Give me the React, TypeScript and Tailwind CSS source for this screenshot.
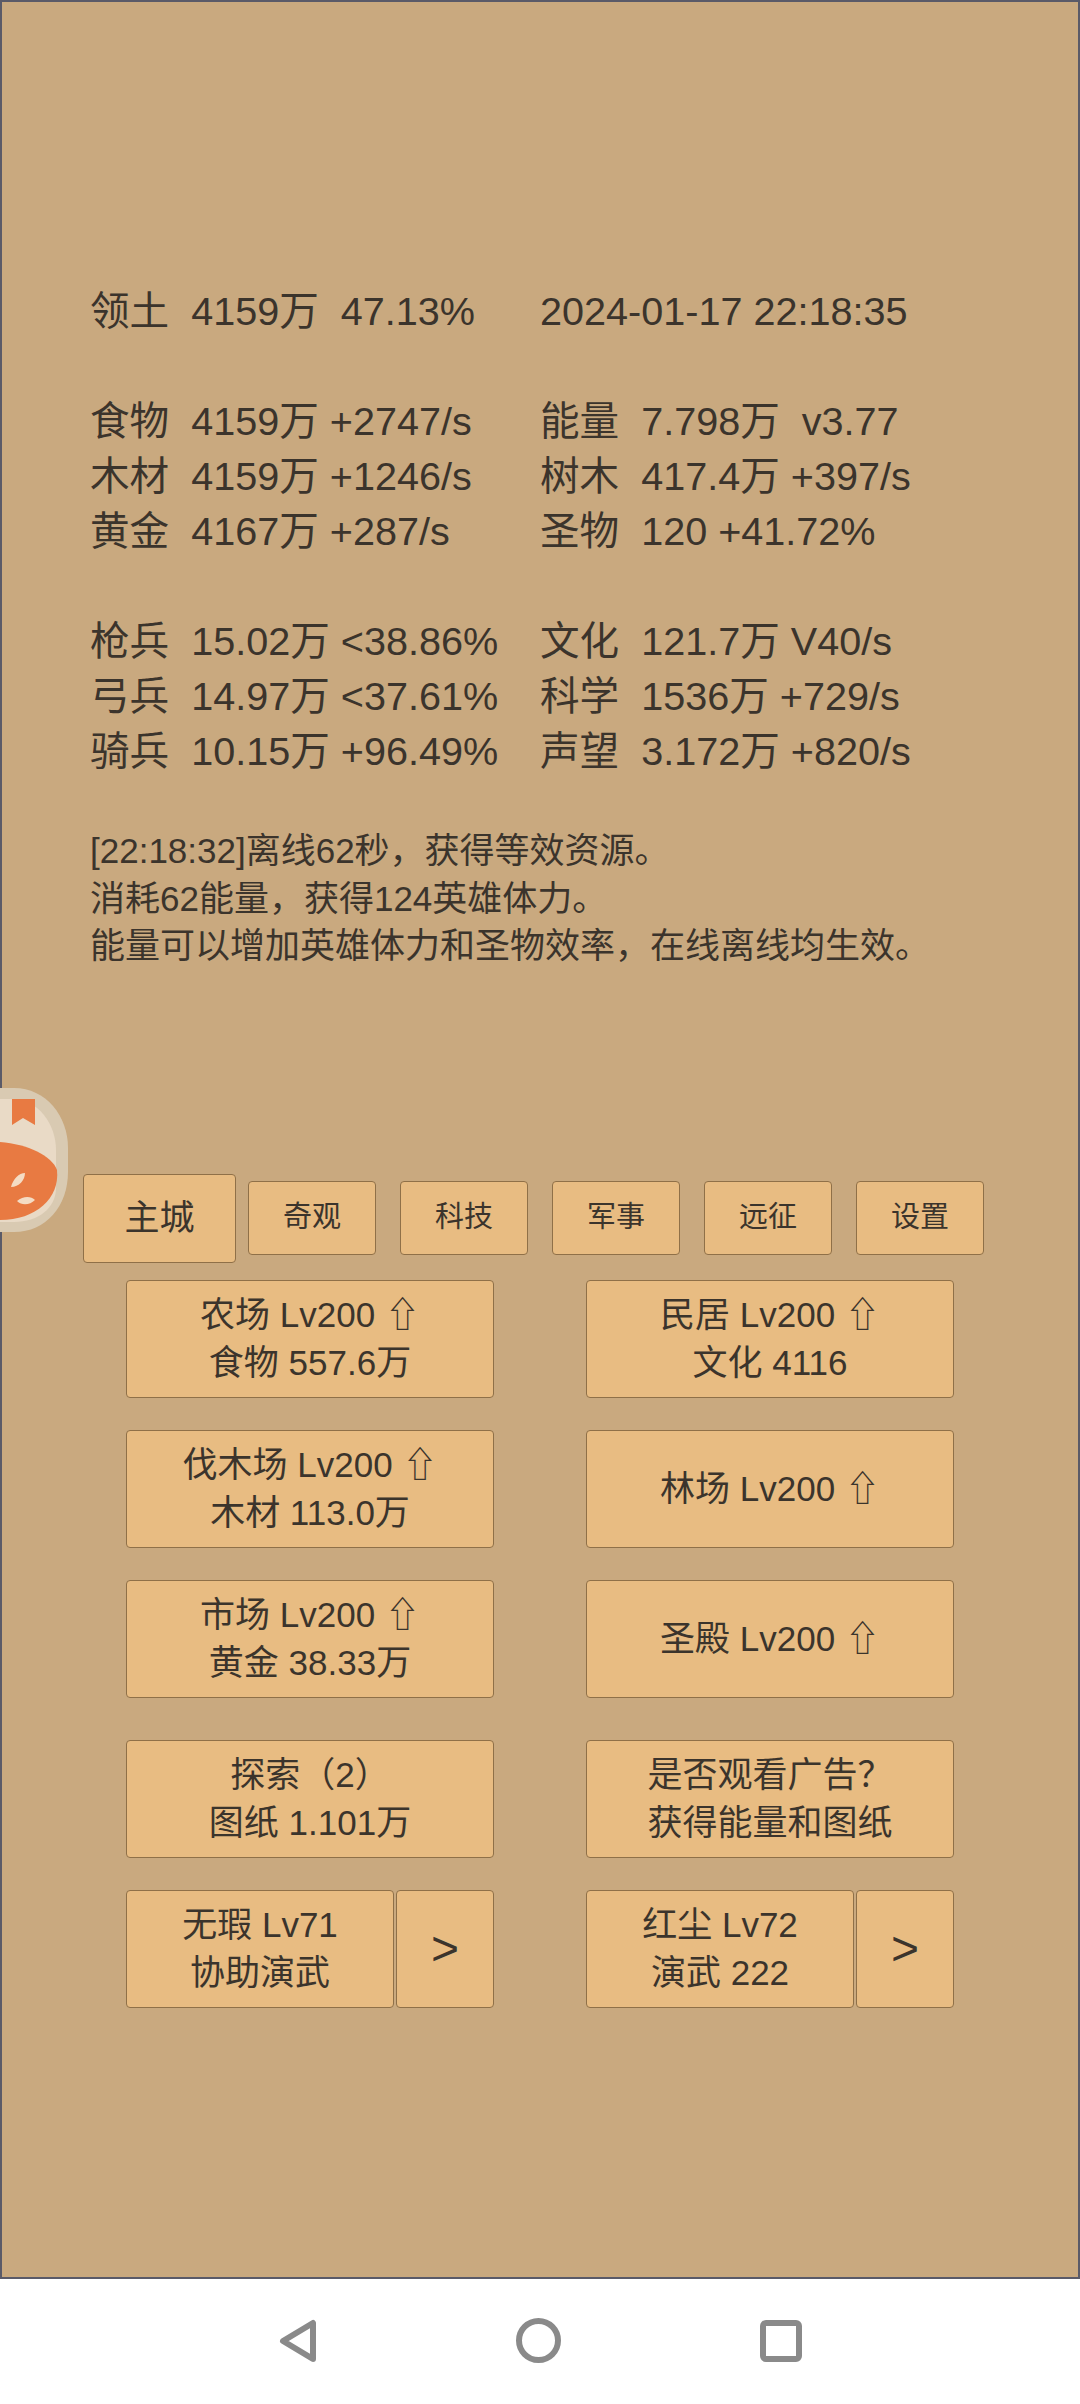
const font = "font-['Liberation_Sans','Noto_Sans_CJK_SC','DejaVu_Sans',sans-serif]";

const statRows = [
  ["领土  4159万  47.13%", "2024-01-17 22:18:35"],
  ["食物  4159万 +2747/s", "能量  7.798万  v3.77"],
  ["木材  4159万 +1246/s", "树木  417.4万 +397/s"],
  ["黄金  4167万 +287/s", "圣物  120 +41.72%"],
  ["枪兵  15.02万 <38.86%", "文化  121.7万 V40/s"],
  ["弓兵  14.97万 <37.61%", "科学  1536万 +729/s"],
  ["骑兵  10.15万 +96.49%", "声望  3.172万 +820/s"],
];

const tabs = ["奇观", "科技", "军事", "远征", "设置"];

const btn = "bg-[#e8bc82] border border-[#8f7048] rounded-[4px] text-center flex flex-col items-center justify-center";

function Building({ top, bottom }: { top: string; bottom?: string }) {
  return (
    <div className={`${btn} w-[368px] h-[118px] text-[35px] leading-[48px]`}>
      <div className="whitespace-pre">{top}</div>
      {bottom && <div className="whitespace-pre">{bottom}</div>}
    </div>
  );
}

function Hero({ top, bottom }: { top: string; bottom: string }) {
  return (
    <div className="w-[368px] h-[118px] flex justify-between">
      <div className={`${btn} w-[268px] h-full text-[35px] leading-[48px]`}>
        <div className="whitespace-pre">{top}</div>
        <div className="whitespace-pre">{bottom}</div>
      </div>
      <div className={`${btn} w-[98px] h-full text-[48px]`}>&gt;</div>
    </div>
  );
}

export default function App() {
  return (
    <div className={`${font} w-[1080px] h-[2404px] bg-white text-[#3b342c] flex flex-col overflow-hidden`}>
      <main className="relative h-[2279px] shrink-0 bg-[#c9a97f] border-2 border-[#5a5a68] pt-[282px]">
        {/* floating ball */}
        <svg className="absolute left-[-2px] top-[1086px]" width="70" height="146" viewBox="0 0 70 146">
          <path d="M0 0H14C46 0 68 28 68 60V84C68 118 46 144 14 144H0Z" fill="#d9cab2" />
          <path d="M0 11H12C38 11 56 36 56 62V100C56 120 38 134 14 134H0Z" fill="#e9dac6" />
          <path d="M12 11H35V37L23 30L12 37Z" fill="#e87a42" />
          <path d="M0 54C28 56 52 68 57 82C60 110 36 132 0 132Z" fill="#e87a42" />
          <path d="M11 99C13 91 19 85 25 85C25 92 19 99 11 99Z" fill="#f4dcc4" />
          <path d="M17 113C23 108 31 108 35 112C30 117 22 118 17 113Z" fill="#f4dcc4" />
        </svg>

        <div className="pl-[88px] text-[39.6px] leading-[55px]">
          <div className="grid grid-cols-[450px_1fr] whitespace-pre">
            {statRows.map((row, i) => (
              <div key={i} className="contents">
                <div className={i === 1 || i === 4 ? "mt-[55px]" : ""}>{row[0]}</div>
                <div className={i === 1 || i === 4 ? "mt-[55px]" : ""}>{row[1]}</div>
              </div>
            ))}
          </div>
          <div className="mt-[48px] text-[35px] leading-[47.5px]">
            <div>[22:18:32]离线62秒，获得等效资源。</div>
            <div>消耗62能量，获得124英雄体力。</div>
            <div>能量可以增加英雄体力和圣物效率，在线离线均生效。</div>
          </div>
        </div>

        <div className="mt-[204px] ml-[81px] flex items-center">
          <div className={`${btn} w-[153px] h-[89px] text-[35px] border-[#3c2f1e] mr-[12px]`}>主城</div>
          <div className="flex gap-[24px]">
            {tabs.map((t) => (
              <div key={t} className={`${btn} w-[128px] h-[74px] text-[29px]`}>{t}</div>
            ))}
          </div>
        </div>

        <div className="mt-[17px] ml-[124px] w-[828px] flex flex-col">
          <div className="flex justify-between">
            <Building top="农场 Lv200 ⇧" bottom="食物 557.6万" />
            <Building top="民居 Lv200 ⇧" bottom="文化 4116" />
          </div>
          <div className="flex justify-between mt-[32px]">
            <Building top="伐木场 Lv200 ⇧" bottom="木材 113.0万" />
            <Building top="林场 Lv200 ⇧" />
          </div>
          <div className="flex justify-between mt-[32px]">
            <Building top="市场 Lv200 ⇧" bottom="黄金 38.33万" />
            <Building top="圣殿 Lv200 ⇧" />
          </div>
          <div className="flex justify-between mt-[42px]">
            <Building top="探索（2）" bottom="图纸 1.101万" />
            <Building top="是否观看广告？" bottom="获得能量和图纸" />
          </div>
          <div className="flex justify-between mt-[32px]">
            <Hero top="无瑕 Lv71" bottom="协助演武" />
            <Hero top="红尘 Lv72" bottom="演武 222" />
          </div>
        </div>
      </main>

      <nav className="flex-1 flex items-center justify-center gap-[199px] pb-[2px]">
        <svg width="38" height="44" viewBox="0 0 38 44" fill="none" stroke="#8a8a8a" strokeWidth="6" strokeLinejoin="round">
          <path d="M34 4V40L4 22Z" />
        </svg>
        <svg width="45" height="45" viewBox="0 0 45 45" fill="none" stroke="#8a8a8a" strokeWidth="6">
          <circle cx="22.5" cy="22.5" r="19.5" />
        </svg>
        <svg width="42" height="42" viewBox="0 0 42 42" fill="none" stroke="#8a8a8a" strokeWidth="6">
          <rect x="3" y="3" width="36" height="36" rx="3" />
        </svg>
      </nav>
    </div>
  );
}
